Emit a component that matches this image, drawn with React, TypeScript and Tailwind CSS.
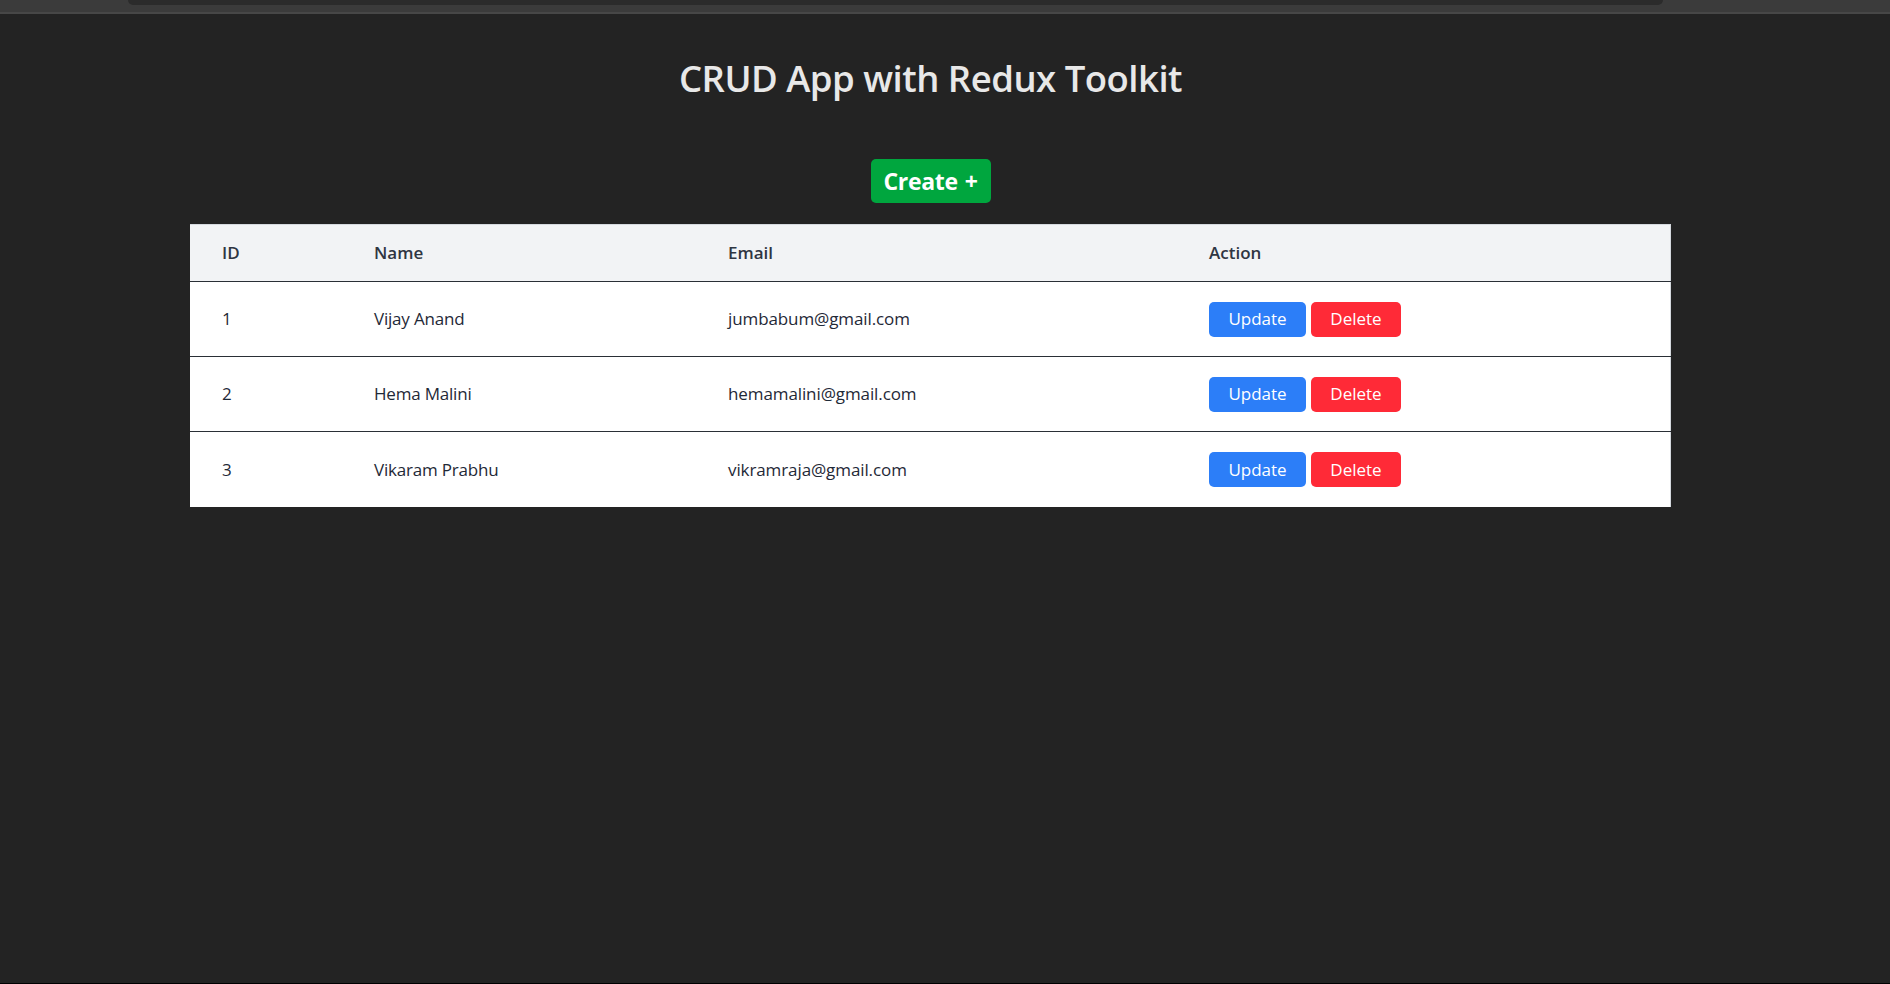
import React from 'react'

interface User {
  id: number
  name: string
  email: string
}

const users: User[] = [
  { id: 1, name: 'Vijay Anand', email: 'jumbabum@gmail.com' },
  { id: 2, name: 'Hema Malini', email: 'hemamalini@gmail.com' },
  { id: 3, name: 'Vikaram Prabhu', email: 'vikramraja@gmail.com' },
]

export default function App() {
  return (
    <div
      className="min-h-screen w-full bg-[#232323] flex flex-col"
      style={{ fontFamily: '"Open Sans", "Noto Sans", sans-serif' }}
    >
      {/* browser chrome strip */}
      <div className="h-[12px] bg-[#3b3b3b]">
        <div className="ml-[128px] w-[1535px] h-[5px] rounded-b-[6px] bg-[#2b2b2b]" />
      </div>
      <div className="h-[2px] bg-[#474747]" />

      <div className="ml-[190px] w-[1481px] flex flex-col items-center">
        <h1 className="mt-[40px] text-[36.5px] leading-[48px] font-semibold text-[#e8e8e8] tracking-[-0.5px]">
          CRUD App with Redux Toolkit
        </h1>

        <button className="mt-[57px] h-[44px] w-[120px] rounded-[5px] bg-[#00a63e] text-white text-[23px] font-bold flex items-center justify-center gap-[7px] tracking-[-0.3px]">
          <span>Create</span>
          <span>+</span>
        </button>

        {/* Users table */}
        <table className="mt-[21px] w-full table-fixed bg-white border-t border-r border-[#d5d9de] text-[17px]">
          <colgroup>
            <col className="w-[152px]" />
            <col className="w-[354px]" />
            <col className="w-[481px]" />
            <col />
          </colgroup>
          <thead>
            <tr className="h-[57px] bg-[#f2f3f5] border-b border-[#2a2f36]">
              <th className="pl-[32px] text-left font-semibold text-[#2f3542]">ID</th>
              <th className="pl-[32px] text-left font-semibold text-[#2f3542]">Name</th>
              <th className="pl-[32px] text-left font-semibold text-[#2f3542]">Email</th>
              <th className="pl-[32px] text-left font-semibold text-[#2f3542]">Action</th>
            </tr>
          </thead>
          <tbody>
            {users.map((user, i) => (
              <tr
                key={user.id}
                className={`h-[75px] ${i < users.length - 1 ? 'border-b border-[#2a2f36]' : ''}`}
              >
                <td className="pl-[32px] text-[#1f2937]">{user.id}</td>
                <td className="pl-[32px] text-[#1f2937] tracking-[-0.2px]">{user.name}</td>
                <td className="pl-[32px] text-[#1f2937] tracking-[-0.1px]">{user.email}</td>
                <td className="pl-[32px]">
                  <div className="flex items-center gap-[5px]">
                    <button className="h-[35px] w-[97px] rounded-[5px] bg-[#2c7ef8] text-white text-[17px]">
                      Update
                    </button>
                    <button className="h-[35px] w-[90px] rounded-[5px] bg-[#ff2a37] text-white text-[17px]">
                      Delete
                    </button>
                  </div>
                </td>
              </tr>
            ))}
          </tbody>
        </table>
      </div>

      <div className="flex-1" />
      <div className="h-[1px] bg-black" />
    </div>
  )
}
